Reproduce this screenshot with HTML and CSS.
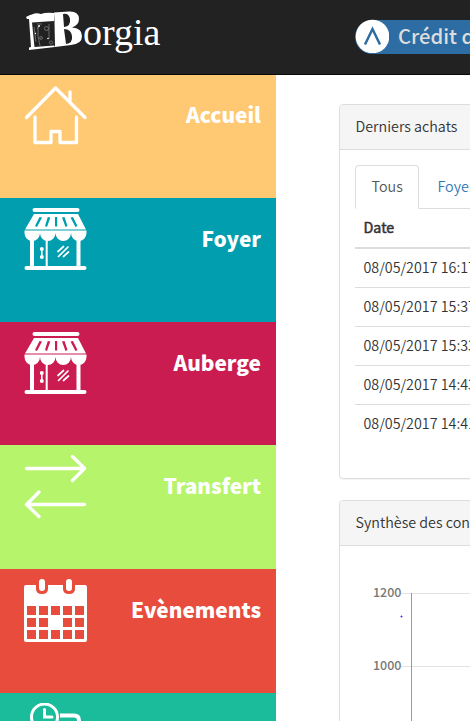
FILE: index.html
```html
<!DOCTYPE html>
<html lang="fr">
<head>
<meta charset="utf-8">
<title>Borgia</title>
<link rel="stylesheet" href="styles.css">
</head>
<body>
<svg class="defs" width="0" height="0">
  <symbol id="shop" viewBox="0 0 64 64">
    <g fill="#fff">
      <rect x="8.500" y="0" width="47" height="4" rx="2"/>
      <path fill-rule="evenodd" d="M10 6H54L62 21.500H1ZM15.500 9L11 18L13 19L18 9.500ZM23.800 9L21 18L23 19L26.300 9.500ZM31 9V18.500H33.200V9ZM38 9.500L41.500 19L43.500 18L40.500 9ZM46.500 9.500L51.500 19L53.500 18L49 9Z"/>
      <path d="M.5 22.500H62.500V25A7.750 8 0 0 1 47 25A7.750 8 0 0 1 31.500 25A7.750 8 0 0 1 16 25A7.750 8 0 0 1 .5 25Z"/>
      <rect x="6" y="30" width="4" height="29"/>
      <rect x="21.700" y="30" width="2" height="29"/>
      <rect x="52.500" y="30" width="4" height="29"/>
      <rect x=".5" y="58" width="62" height="4" rx="2"/>
      <circle cx="17.800" cy="41" r="2"/><circle cx="17.800" cy="49" r="2"/>
      <rect x="17" y="41" width="1.600" height="8"/>
    </g>
    <path d="M34 43.500L39.500 38.500M34.500 48.500L44 39M39.500 48.500L44.500 44" fill="none" stroke="#fff" stroke-width="1.700" stroke-linecap="round"/>
  </symbol>
</svg>

<header class="navbar">
  <a class="brand">
    <svg width="58" height="42" viewBox="0 0 58 42">
      <path fill="#fff" d="M0 6L4 4L6 3.500Q10 1.500 15 3Q20 1 28 2L28 10L6 11.500L8.500 36L28 34.500L29 36L3 39V36.500L5 36L3 8H1Z"/>
      <path fill="#fff" fill-rule="evenodd" d="M28 1.500L43 .5Q53 0 53 8Q53 14 46 16.500Q56 17 56 25Q56 33 45 34L29 36L28.500 10ZM37 3L38 16Q45 15 44 8Q43 2 37 3ZM38 18L40 33Q47 32 46 25Q45 18 38 18Z"/>
      <g fill="none" stroke="#888" stroke-width=".7">
        <path d="M12 15V25L14 35M14 14L11 18M23 13V28M11 13H16M8 16L10 31"/>
        <circle cx="20.500" cy="17.500" r="2"/><circle cx="15" cy="27" r="1.400"/><circle cx="25" cy="31.500" r="1.600"/>
      </g>
      <g fill="#fff"><circle cx="13" cy="15" r=".9"/><circle cx="9.500" cy="22.500" r=".7"/><circle cx="22" cy="27.500" r=".8"/></g>
    </svg>
    <span class="brand-text">orgia</span>
  </a>
  <div class="credit">
    <svg class="credit-logo" width="34" height="34" viewBox="0 0 34 34">
      <circle cx="17.500" cy="17.500" r="16.800" fill="#fff"/>
      <path d="M10 25.500L17.500 10L25 25.500" fill="none" stroke="#2e6da4" stroke-width="2.500"/>
    </svg>
    <span>Crédit de</span>
  </div>
</header>

<div class="layout">
  <nav class="sidebar">
    <a class="tile home">
      <svg width="64" height="64" viewBox="0 0 64 64" fill="none" stroke="#fff" stroke-width="3.300" stroke-linecap="round" stroke-linejoin="round"><path d="M2.500 32.500L31.500 3L61 32.500M46 16V7M11 32V57.500H27V46.500H36V57.500H52.500V32"/></svg>
      <span>Accueil</span>
    </a>
    <a class="tile foyer"><svg width="64" height="64"><use href="#shop"/></svg><span>Foyer</span></a>
    <a class="tile auberge"><svg width="64" height="64"><use href="#shop"/></svg><span>Auberge</span></a>
    <a class="tile transfert">
      <svg width="64" height="64" viewBox="0 0 64 64" fill="none" stroke="#fff" stroke-width="3.300" stroke-linecap="round" stroke-linejoin="round"><path d="M2.500 13.500H60.500M48.500 1.500L60.500 13.500L48.500 25.500M60.500 49.500H2.500M15 37L2.500 49.500L15 61.500"/></svg>
      <span>Transfert</span>
    </a>
    <a class="tile events">
      <svg width="64" height="64" viewBox="0 0 64 64">
        <rect y="6" width="63" height="57" rx="2" fill="#fff"/>
        <g fill="#e84c3d">
          <path d="M12 5H24V10Q24 15 18 15Q12 15 12 10ZM39 5H51V10Q51 15 45 15Q39 15 39 10Z"/>
          <path d="M3 27h9v9H3zM15 27h9v9h-9zM27 27h9v9h-9zM39 27h9v9h-9zM51 27h9v9h-9zM3 39h9v9H3zM15 39h9v9h-9zM39 39h9v9h-9zM51 39h9v9h-9zM3 51h9v9H3zM15 51h9v9h-9zM27 51h9v9h-9zM39 51h9v9h-9zM51 51h9v9h-9z"/>
        </g>
        <g fill="#fff"><rect x="15" y="0" width="6" height="12" rx="3"/><rect x="42" y="0" width="6" height="12" rx="3"/></g>
      </svg>
      <span>Evènements</span>
    </a>
    <a class="tile history">
      <svg width="64" height="64" viewBox="0 0 64 64" fill="none" stroke="#fff" stroke-width="3" stroke-linecap="round"><circle cx="20.500" cy="14" r="13"/><path d="M20.500 6.500V14H28"/><path stroke-linecap="butt" stroke-width="4" d="M36 12.500H50Q55 12.500 55 17.500V60"/></svg>
    </a>
  </nav>

  <main class="content">
    <section class="panel purchases">
      <h3 class="panel-heading">Derniers achats</h3>
      <div class="panel-body">
        <div class="tabs"><a class="tab active">Tous</a><a class="tab">Foyer</a></div>
        <table>
          <thead><tr><th>Date</th></tr></thead>
          <tbody>
            <tr><td>08/05/2017 16:17</td></tr>
            <tr><td>08/05/2017 15:37</td></tr>
            <tr><td>08/05/2017 15:33</td></tr>
            <tr><td>08/05/2017 14:43</td></tr>
            <tr><td>08/05/2017 14:41</td></tr>
          </tbody>
        </table>
      </div>
    </section>
    <section class="panel summary">
      <h3 class="panel-heading">Synthèse des consommations</h3>
      <svg class="chart" width="480" height="300" viewBox="0 0 480 300">
        <path d="M61 47.500H480M61 120.500H480" stroke="#e3e3e3"/>
        <path d="M71.500 47V300" stroke="#999"/>
        <text x="61.500" y="51" text-anchor="end">1200</text>
        <text x="61.500" y="124" text-anchor="end">1000</text>
        <path d="M60.500 70.500h2M61.500 69.500v2" stroke="#33f"/>
      </svg>
    </section>
  </main>
</div>
</body>
</html>
```
FILE: styles.css
```css
* { box-sizing: border-box; }
html, body { margin: 0; height: 721px; overflow: hidden; }
body {
  font-family: "Noto Sans CJK JP", "Noto Sans", sans-serif;
  font-size: 14.3px;
  font-weight: 350;
  line-height: 22px;
  color: #333;
  background: #fff;
}
.defs { display: none; }
.navbar {
  display: flex;
  height: 75px;
  padding-left: 26px;
  background: #222;
  border-bottom: 1px solid #080808;
  overflow: hidden;
}
.brand { display: flex; padding-top: 11px; width: 329px; flex: none; }
.brand-text {
  margin-left: -1px;
  font: 38px/42px "Liberation Serif", serif;
  color: #fff;
}
.credit {
  display: flex;
  flex: none;
  width: 425px;
  height: 34px;
  margin-top: 20px;
  background: #2e6da4;
  color: #ddd;
  font-size: 20.200px;
  font-weight: 500;
  line-height: 31px;
  border-radius: 17px 0 0 17px;
}
.credit-logo { flex: none; margin: -1px 9px 0 0; }
.layout { display: flex; height: 646px; overflow: hidden; }
.sidebar { width: 276px; flex: none; }
.tile {
  display: flex;
  justify-content: space-between;
  height: 123.700px;
  padding: 10px 15px 0 24px;
  color: #fff;
  font-size: 20.800px;
  font-weight: 900;
  line-height: 60px;
}
.tile svg { flex: none; }
.home { height: 123px; line-height: 59px; background: #ffc973; }
.foyer { background: #009eae; }
.auberge { background: #cb1c52; }
.transfert { background: #b6f46b; }
.events { background: #e84c3d; }
.history { background: #1bbc9b; }
.content { flex: none; width: 567px; padding: 29px 24px 0 63px; }
.panel {
  border: 1px solid #ddd;
  border-radius: 4px;
  box-shadow: 0 1px 1px rgba(0, 0, 0, .05);
  width: 480px;
}
.purchases { height: 375px; margin-bottom: 21px; }
.panel-heading {
  height: 45px;
  margin: 0;
  padding: 10px 15.500px;
  font-size: 14.300px;
  font-weight: 350;
  background: #f5f5f5;
  border-bottom: 1px solid #ddd;
  border-radius: 3px 3px 0 0;
}
.panel-body { padding: 15px; }
.tabs { display: flex; height: 44px; border-bottom: 1px solid #ddd; }
.tab { padding: 10px 16.500px; margin-right: 2px; color: #337ab7; }
.tab.active {
  width: 64px;
  height: 44px;
  padding: 9px 15.500px;
  color: #555;
  background: #fff;
  border: 1px solid #ddd;
  border-bottom-color: #fff;
  border-radius: 4px 4px 0 0;
}
table { width: 100%; border-collapse: separate; border-spacing: 0; }
th {
  height: 40px;
  padding: 0 8.500px 2px;
  text-align: left;
  font-weight: 400;
  -webkit-text-stroke: .5px #333;
  border-bottom: 2px solid #ddd;
}
td { height: 39px; padding: 0 8.500px 2px; border-bottom: 1px solid #ddd; }
tr:last-child td { height: 38px; border-bottom: 0; }
.chart { display: block; }
.chart text { font-size: 12.500px; font-weight: 500; fill: #777; }
```
